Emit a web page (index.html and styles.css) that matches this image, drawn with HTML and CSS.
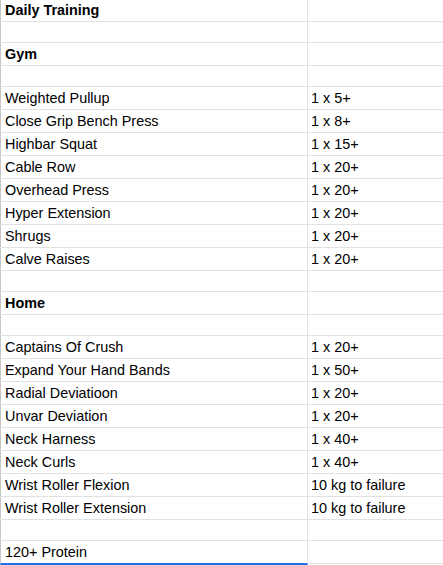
FILE: index.html
```html
<!DOCTYPE html>
<html>
<head>
<meta charset="utf-8">
<link rel="stylesheet" href="styles.css">
</head>
<body>
<div class="sheet">
  <div class="row first bold"><div class="c1">Daily Training</div><div class="c2"></div></div>
  <div class="row blank"><div class="c1"></div><div class="c2"></div></div>
  <div class="row bold"><div class="c1">Gym</div><div class="c2"></div></div>
  <div class="row blank"><div class="c1"></div><div class="c2"></div></div>
  <div class="row"><div class="c1">Weighted Pullup</div><div class="c2">1 x 5+</div></div>
  <div class="row"><div class="c1">Close Grip Bench Press</div><div class="c2">1 x 8+</div></div>
  <div class="row"><div class="c1">Highbar Squat</div><div class="c2">1 x 15+</div></div>
  <div class="row"><div class="c1">Cable Row</div><div class="c2">1 x 20+</div></div>
  <div class="row"><div class="c1">Overhead Press</div><div class="c2">1 x 20+</div></div>
  <div class="row"><div class="c1">Hyper Extension</div><div class="c2">1 x 20+</div></div>
  <div class="row"><div class="c1">Shrugs</div><div class="c2">1 x 20+</div></div>
  <div class="row"><div class="c1">Calve Raises</div><div class="c2">1 x 20+</div></div>
  <div class="row blank"><div class="c1"></div><div class="c2"></div></div>
  <div class="row bold"><div class="c1">Home</div><div class="c2"></div></div>
  <div class="row blank"><div class="c1"></div><div class="c2"></div></div>
  <div class="row"><div class="c1">Captains Of Crush</div><div class="c2">1 x 20+</div></div>
  <div class="row"><div class="c1">Expand Your Hand Bands</div><div class="c2">1 x 50+</div></div>
  <div class="row"><div class="c1">Radial Deviatioon</div><div class="c2">1 x 20+</div></div>
  <div class="row"><div class="c1">Unvar Deviation</div><div class="c2">1 x 20+</div></div>
  <div class="row"><div class="c1">Neck Harness</div><div class="c2">1 x 40+</div></div>
  <div class="row"><div class="c1">Neck Curls</div><div class="c2">1 x 40+</div></div>
  <div class="row"><div class="c1">Wrist Roller Flexion</div><div class="c2">10 kg to failure</div></div>
  <div class="row"><div class="c1">Wrist Roller Extension</div><div class="c2">10 kg to failure</div></div>
  <div class="row blank"><div class="c1"></div><div class="c2"></div></div>
  <div class="row last"><div class="c1">120+ Protein</div><div class="c2"></div></div>
</div>
</body>
</html>
```

FILE: styles.css
```css
html, body {
  margin: 0;
  padding: 0;
  background: #ffffff;
}

.sheet {
  width: 443px;
  height: 565px;
  overflow: hidden;
  font-family: "Liberation Sans", Arial, sans-serif;
  font-size: 14.4px;
  color: #000000;
}

.row {
  display: grid;
  grid-template-columns: 308px 1fr;
  height: 22px;
  border-bottom: 1px solid #e2e2e3;
}

.row.first {
  height: 21px;
}

.row.blank {
  height: 20px;
}

.row.bold {
  font-weight: bold;
}

.c1,
.c2 {
  line-height: 17px;
  padding-top: 3px;
  white-space: nowrap;
  overflow: hidden;
}

.c1 {
  border-left: 1px solid #c6c6c6;
  border-right: 1px solid #e2e2e3;
  padding-left: 4px;
}

.c2 {
  padding-left: 3px;
}

.row.first .c1,
.row.first .c2 {
  padding-top: 2px;
}

.row.last {
  height: 24px;
  border-bottom: none;
}

.row.last .c1 {
  height: 19px;
  border-bottom: 2px solid #1a73e8;
}

.row.last .c2 {
  height: 19px;
  border-bottom: 1px solid #e2e2e3;
}
```
